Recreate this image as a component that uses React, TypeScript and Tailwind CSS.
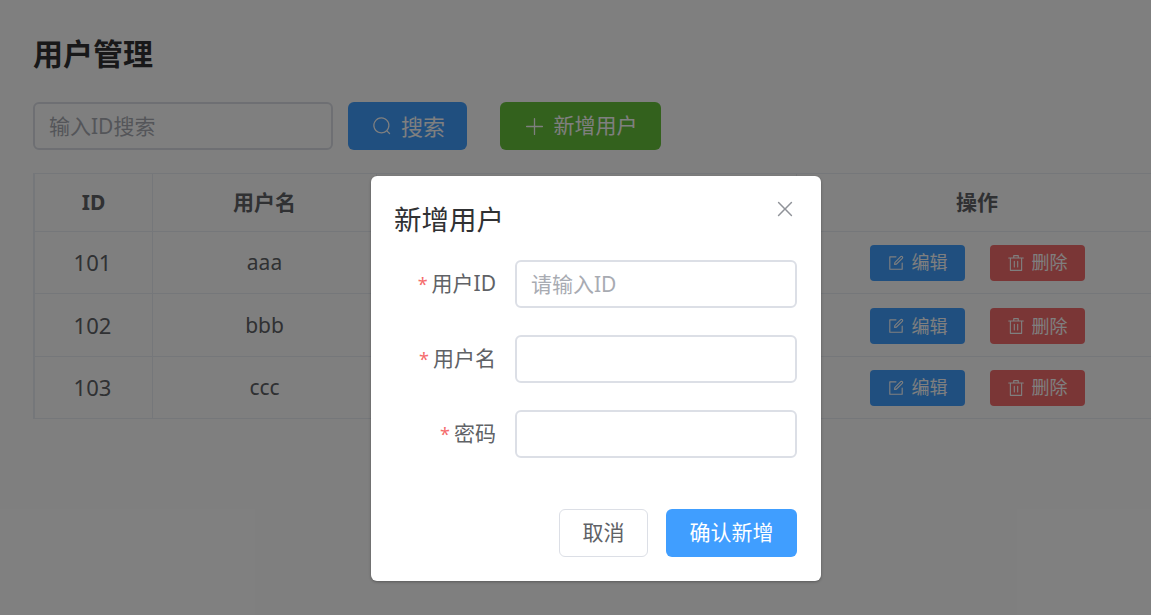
const font = "font-['Noto_Sans','Noto_Sans_CJK_SC',sans-serif]";

const rows = [
  { id: 101, name: "aaa" },
  { id: 102, name: "bbb" },
  { id: 103, name: "ccc" },
];

function EditIcon() {
  return (
    <svg viewBox="0 0 1024 1024" className="h-[18px] w-[18px]" fill="currentColor">
      <path d="M832 512a32 32 0 1 1 64 0v352a32 32 0 0 1-32 32H160a32 32 0 0 1-32-32V160a32 32 0 0 1 32-32h352a32 32 0 0 1 0 64H192v640h640z" />
      <path d="m469.952 554.24 52.8-7.552L847.104 222.4a32 32 0 1 0-45.248-45.248L477.44 501.44l-7.552 52.8zm422.4-422.4a96 96 0 0 1 0 135.808l-331.84 331.84a32 32 0 0 1-18.112 9.088L436.8 623.68a32 32 0 0 1-36.224-36.224l15.104-105.6a32 32 0 0 1 9.024-18.112l331.904-331.84a96 96 0 0 1 135.744 0z" />
    </svg>
  );
}

function TrashIcon() {
  return (
    <svg viewBox="0 0 1024 1024" className="h-[18px] w-[18px]" fill="currentColor">
      <path d="M160 256H96a32 32 0 0 1 0-64h256V95.936a32 32 0 0 1 32-32h256a32 32 0 0 1 32 32V192h256a32 32 0 1 1 0 64h-64v672a32 32 0 0 1-32 32H192a32 32 0 0 1-32-32zm448-64v-64H416v64zM224 896h576V256H224zm192-128a32 32 0 0 1-32-32V416a32 32 0 0 1 64 0v320a32 32 0 0 1-32 32m192 0a32 32 0 0 1-32-32V416a32 32 0 0 1 64 0v320a32 32 0 0 1-32 32" />
    </svg>
  );
}

function SearchIcon() {
  return (
    <svg viewBox="0 0 1024 1024" className="h-[20px] w-[20px]" fill="currentColor">
      <path d="m795.904 750.72 124.992 124.928a32 32 0 0 1-45.248 45.248L750.656 795.904a416 416 0 1 1 45.248-45.248zM480 832a352 352 0 1 0 0-704 352 352 0 0 0 0 704" />
    </svg>
  );
}

function PlusIcon() {
  return (
    <svg viewBox="0 0 1024 1024" className="h-[21px] w-[21px]" fill="currentColor">
      <path d="M480 480V128a32 32 0 0 1 64 0v352h352a32 32 0 1 1 0 64H544v352a32 32 0 1 1-64 0V544H128a32 32 0 0 1 0-64z" />
    </svg>
  );
}

function FormRow({ label, placeholder }: { label: string; placeholder?: string }) {
  return (
    <div className="flex h-[48px] items-center">
      <div className="flex w-[102px] items-center justify-end text-[21px] text-[#606266]">
        <span className="mr-[4px] text-[18px] text-[#f56c6c]">*</span>
        {label}
      </div>
      <input
        placeholder={placeholder}
        className="ml-[19px] h-[48px] w-[282px] rounded-[6px] border-2 border-[#dcdfe6] bg-white px-[14px] text-[21px] outline-none placeholder:text-[#a8abb2]"
      />
    </div>
  );
}

export default function App() {
  return (
    <div className={`relative h-[615px] w-[1151px] overflow-hidden bg-white ${font}`}>
      <div className="w-[1200px] pl-[33px] pt-[32px]">
        <h1 className="h-[43px] text-[30px] font-bold leading-[43px] text-[#303133]">用户管理</h1>
        <div className="mt-[27px] flex h-[48px]">
          <input
            placeholder="输入ID搜索"
            className="h-[48px] w-[300px] rounded-[6px] border-2 border-[#dcdfe6] px-[14px] text-[21px] outline-none placeholder:text-[#a8abb2]"
          />
          <button className="ml-[15px] flex h-[48px] w-[119px] items-center justify-center gap-[9px] rounded-[6px] bg-[#409eff] pl-[2px] text-[22px] text-white">
            <SearchIcon />
            搜索
          </button>
          <button className="ml-[33px] flex h-[48px] w-[161px] items-center justify-center gap-[9px] rounded-[6px] bg-[#67c23a] text-[21px] text-white">
            <PlusIcon />
            新增用户
          </button>
        </div>
        <div className="mt-[23px] w-[1124px] border-l-2 border-t border-[#ebeef5]">
          <div className="flex h-[58px] border-b border-[#ebeef5] text-[21px] font-bold text-[#606266]">
            <div className="flex w-[118px] items-center justify-center border-r border-[#ebeef5]">ID</div>
            <div className="flex w-[224px] items-center justify-center border-r border-[#ebeef5]">用户名</div>
            <div className="flex w-[420px] items-center justify-center border-r border-[#ebeef5]">密码</div>
            <div className="flex w-[360px] items-center justify-center">操作</div>
          </div>
          {rows.map((r, i) => (
            <div
              key={r.id}
              className={`flex border-b border-[#ebeef5] text-[21px] text-[#606266] ${i === 1 ? "h-[63px]" : "h-[62px]"}`}
            >
              <div className="flex w-[118px] items-center justify-center border-r border-[#ebeef5] pr-[2px] text-[22px]">{r.id}</div>
              <div className="flex w-[224px] items-center justify-center border-r border-[#ebeef5] pt-[1px]">{r.name}</div>
              <div className="flex w-[420px] items-center justify-center border-r border-[#ebeef5]">******</div>
              <div className={`flex w-[360px] items-center justify-center gap-[25px] ${i === 1 ? "pt-[2px]" : ""}`}>
                <button className="flex h-[36px] w-[95px] items-center justify-center gap-[7px] rounded-[4px] bg-[#409eff] text-[18px] text-white">
                  <EditIcon />
                  编辑
                </button>
                <button className="flex h-[36px] w-[95px] items-center justify-center gap-[7px] rounded-[4px] bg-[#f56c6c] text-[18px] text-white">
                  <TrashIcon />
                  删除
                </button>
              </div>
            </div>
          ))}
        </div>
      </div>

      <div className="absolute inset-0 bg-black/50 pl-[371px] pt-[176px]">
        <div className="relative h-[405px] w-[450px] rounded-[6px] bg-white px-[23px] pt-[24px] shadow-[0_1px_3px_rgba(0,0,0,0.3)]">
          <div className="h-[40px] text-[27.5px] leading-[40px] text-[#303133]">新增用户</div>
          <button className="absolute right-[24px] top-[21px] text-[#909399]">
            <svg viewBox="0 0 1024 1024" className="h-[24px] w-[24px]" fill="currentColor">
              <path d="M764.288 214.592 512 466.88 259.712 214.592a31.936 31.936 0 0 0-45.12 45.12L466.752 512 214.528 764.224a31.936 31.936 0 1 0 45.12 45.184L512 557.184l252.288 252.288a31.936 31.936 0 0 0 45.12-45.12L557.12 512.064l252.288-252.352a31.936 31.936 0 1 0-45.12-45.184z" />
            </svg>
          </button>
          <div className="mt-[20px] flex flex-col gap-[27px]">
            <FormRow label="用户ID" placeholder="请输入ID" />
            <FormRow label="用户名" />
            <FormRow label="密码" />
          </div>
          <div className="mt-[51px] flex justify-end gap-[18px] pr-[1px]">
            <button className="h-[48px] w-[89px] rounded-[6px] border border-[#dcdfe6] bg-white text-[21px] text-[#606266]">取消</button>
            <button className="h-[48px] w-[131px] rounded-[6px] bg-[#409eff] text-[21px] text-white">确认新增</button>
          </div>
        </div>
      </div>
    </div>
  );
}
